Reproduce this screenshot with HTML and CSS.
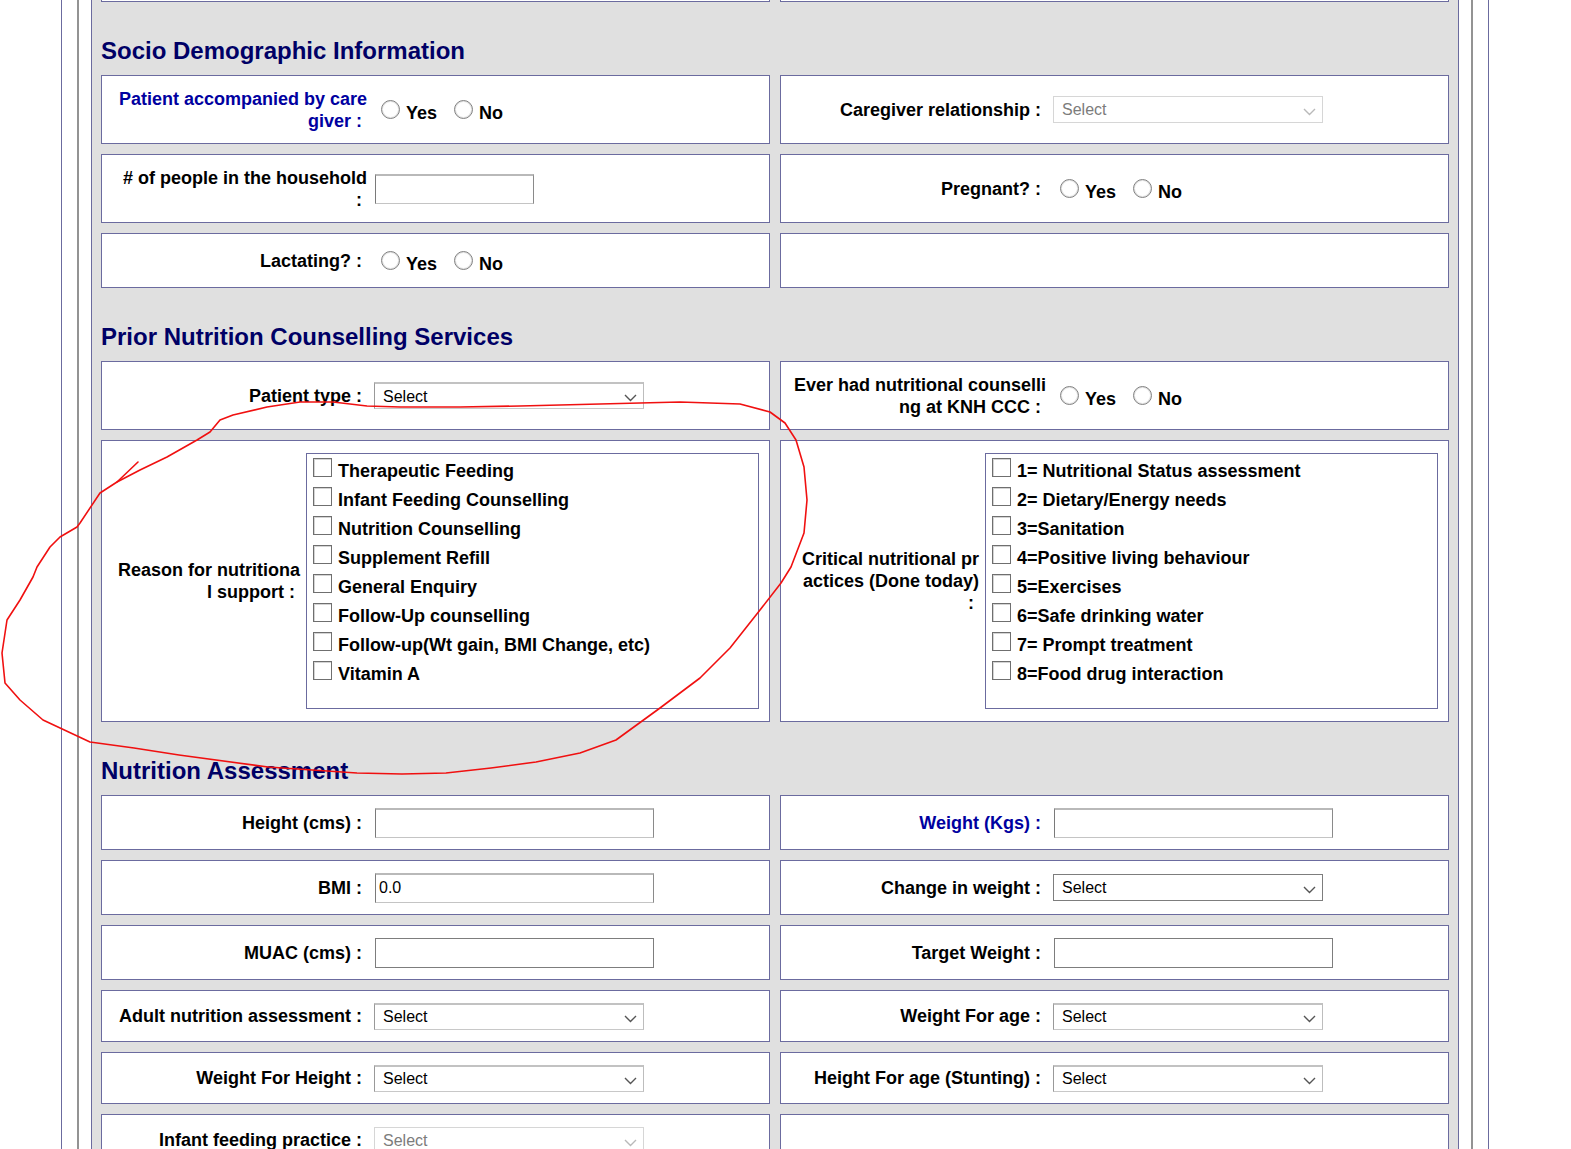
FILE: index.html
```html
<!DOCTYPE html>
<html lang="en">
<head>
    <meta charset="UTF-8">
    <meta name="viewport" content="width=device-width, initial-scale=1.0">
    <title>Nutrition Form</title>
    <link rel="stylesheet" href="styles.css">
</head>
<body>
    <div class="shell">
        <div class="groove">
            <div class="panel">
                <div class="row cut">
                    <div class="box"></div>
                    <div class="box"></div>
                </div>

                <h2 class="section-title">Socio Demographic Information</h2>
                <div class="row tall">
                    <div class="box">
                        <div class="label blue">Patient accompanied by care giver :&nbsp;</div>
                        <div class="field">
                            <label class="opt"><input type="radio" name="caregiver">Yes</label>
                            <label class="opt"><input type="radio" name="caregiver">No</label>
                        </div>
                    </div>
                    <div class="box">
                        <div class="label">Caregiver relationship :&nbsp;</div>
                        <div class="field">
                            <span class="select-wrap disabled">
                                <select disabled><option>Select</option></select>
                                <svg class="chevron" width="13" height="8" viewBox="0 0 13 8"><path d="M1 1l5.5 5.5L12 1"/></svg>
                            </span>
                        </div>
                    </div>
                </div>
                <div class="row tall">
                    <div class="box">
                        <div class="label"># of people in the household<br>:&nbsp;</div>
                        <div class="field"><input type="text" class="text-input small"></div>
                    </div>
                    <div class="box">
                        <div class="label">Pregnant? :&nbsp;</div>
                        <div class="field">
                            <label class="opt"><input type="radio" name="pregnant">Yes</label>
                            <label class="opt"><input type="radio" name="pregnant">No</label>
                        </div>
                    </div>
                </div>
                <div class="row short">
                    <div class="box">
                        <div class="label">Lactating? :&nbsp;</div>
                        <div class="field">
                            <label class="opt"><input type="radio" name="lactating">Yes</label>
                            <label class="opt"><input type="radio" name="lactating">No</label>
                        </div>
                    </div>
                    <div class="box"></div>
                </div>

                <h2 class="section-title">Prior Nutrition Counselling Services</h2>
                <div class="row tall">
                    <div class="box">
                        <div class="label">Patient type :&nbsp;</div>
                        <div class="field">
                            <span class="select-wrap">
                                <select><option>Select</option></select>
                                <svg class="chevron" width="13" height="8" viewBox="0 0 13 8"><path d="M1 1l5.5 5.5L12 1"/></svg>
                            </span>
                        </div>
                    </div>
                    <div class="box">
                        <div class="label">Ever had nutritional counselling at KNH CCC :&nbsp;</div>
                        <div class="field">
                            <label class="opt"><input type="radio" name="counselled">Yes</label>
                            <label class="opt"><input type="radio" name="counselled">No</label>
                        </div>
                    </div>
                </div>
                <div class="row">
                    <div class="box checks-box">
                        <div class="label narrow">Reason for nutritional support :&nbsp;</div>
                        <div class="check-list">
                            <label class="check-item"><input type="checkbox">Therapeutic Feeding</label>
                            <label class="check-item"><input type="checkbox">Infant Feeding Counselling</label>
                            <label class="check-item"><input type="checkbox">Nutrition Counselling</label>
                            <label class="check-item"><input type="checkbox">Supplement Refill</label>
                            <label class="check-item"><input type="checkbox">General Enquiry</label>
                            <label class="check-item"><input type="checkbox">Follow-Up counselling</label>
                            <label class="check-item"><input type="checkbox">Follow-up(Wt gain, BMI Change, etc)</label>
                            <label class="check-item"><input type="checkbox">Vitamin A</label>
                        </div>
                    </div>
                    <div class="box checks-box">
                        <div class="label narrow">Critical nutritional practices (Done today) :&nbsp;</div>
                        <div class="check-list">
                            <label class="check-item"><input type="checkbox">1= Nutritional Status assessment</label>
                            <label class="check-item"><input type="checkbox">2= Dietary/Energy needs</label>
                            <label class="check-item"><input type="checkbox">3=Sanitation</label>
                            <label class="check-item"><input type="checkbox">4=Positive living behaviour</label>
                            <label class="check-item"><input type="checkbox">5=Exercises</label>
                            <label class="check-item"><input type="checkbox">6=Safe drinking water</label>
                            <label class="check-item"><input type="checkbox">7= Prompt treatment</label>
                            <label class="check-item"><input type="checkbox">8=Food drug interaction</label>
                        </div>
                    </div>
                </div>

                <h2 class="section-title">Nutrition Assessment</h2>
                <div class="row short">
                    <div class="box">
                        <div class="label">Height (cms) :&nbsp;</div>
                        <div class="field"><input type="text" class="text-input"></div>
                    </div>
                    <div class="box">
                        <div class="label blue">Weight (Kgs) :&nbsp;</div>
                        <div class="field"><input type="text" class="text-input"></div>
                    </div>
                </div>
                <div class="row short">
                    <div class="box">
                        <div class="label">BMI :&nbsp;</div>
                        <div class="field"><input type="text" class="text-input" value="0.0"></div>
                    </div>
                    <div class="box">
                        <div class="label">Change in weight :&nbsp;</div>
                        <div class="field">
                            <span class="select-wrap dark">
                                <select><option>Select</option></select>
                                <svg class="chevron" width="13" height="8" viewBox="0 0 13 8"><path d="M1 1l5.5 5.5L12 1"/></svg>
                            </span>
                        </div>
                    </div>
                </div>
                <div class="row short">
                    <div class="box">
                        <div class="label">MUAC (cms) :&nbsp;</div>
                        <div class="field"><input type="text" class="text-input dark"></div>
                    </div>
                    <div class="box">
                        <div class="label">Target Weight :&nbsp;</div>
                        <div class="field"><input type="text" class="text-input dark"></div>
                    </div>
                </div>
                <div class="row compact">
                    <div class="box">
                        <div class="label">Adult nutrition assessment :&nbsp;</div>
                        <div class="field">
                            <span class="select-wrap">
                                <select><option>Select</option></select>
                                <svg class="chevron" width="13" height="8" viewBox="0 0 13 8"><path d="M1 1l5.5 5.5L12 1"/></svg>
                            </span>
                        </div>
                    </div>
                    <div class="box">
                        <div class="label">Weight For age :&nbsp;</div>
                        <div class="field">
                            <span class="select-wrap">
                                <select><option>Select</option></select>
                                <svg class="chevron" width="13" height="8" viewBox="0 0 13 8"><path d="M1 1l5.5 5.5L12 1"/></svg>
                            </span>
                        </div>
                    </div>
                </div>
                <div class="row compact">
                    <div class="box">
                        <div class="label">Weight For Height :&nbsp;</div>
                        <div class="field">
                            <span class="select-wrap">
                                <select><option>Select</option></select>
                                <svg class="chevron" width="13" height="8" viewBox="0 0 13 8"><path d="M1 1l5.5 5.5L12 1"/></svg>
                            </span>
                        </div>
                    </div>
                    <div class="box">
                        <div class="label">Height For age (Stunting) :&nbsp;</div>
                        <div class="field">
                            <span class="select-wrap">
                                <select><option>Select</option></select>
                                <svg class="chevron" width="13" height="8" viewBox="0 0 13 8"><path d="M1 1l5.5 5.5L12 1"/></svg>
                            </span>
                        </div>
                    </div>
                </div>
                <div class="row compact">
                    <div class="box">
                        <div class="label">Infant feeding practice :&nbsp;</div>
                        <div class="field">
                            <span class="select-wrap disabled">
                                <select disabled><option>Select</option></select>
                                <svg class="chevron" width="13" height="8" viewBox="0 0 13 8"><path d="M1 1l5.5 5.5L12 1"/></svg>
                            </span>
                        </div>
                    </div>
                    <div class="box"></div>
                </div>
            </div>
        </div>
    </div>

    <!-- reviewer's red pen mark over the screenshot -->
    <svg class="annotation" width="1571" height="1149" viewBox="0 0 1571 1149">
        <path d="M138 462 L117 482"/>
        <path d="M117 482 L140 470 L167 457 L197 440 L210 432 L220 420 L233 415 L267 407 L300 402 L333 402 L367 406 L400 407 L460 407 L520 406 L600 404 L680 402 L740 404 L770 412 L785 423 L796 440 L804 467 L807 500 L804 533 L791 567 L781 583 L760 610 L730 648 L700 678 L660 708 L616 740 L580 753 L536 762 L491 768 L446 773 L402 774 L357 773 L312 770 L268 767 L179 755 L134 748 L90 742 L43 720 L20 700 L5 683 L2 653 L7 620 L20 600 L33 577 L37 567 L50 547 L60 537 L77 527 L80 523 L100 493 L117 482"/>
    </svg>
</body>
</html>
```

FILE: styles.css
```css
html, body {
    margin: 0;
    padding: 0;
    height: 100%;
    overflow: hidden;
}
body {
    position: relative;
    background-color: #fff;
    font-family: "Liberation Sans", Arial, sans-serif;
    font-size: 18px;
    font-weight: bold;
    color: #000;
}

/* nested frame lines */
.shell {
    margin-left: 61px;
    width: 1396px;
    padding: 0 15px;
    border-left: 1px solid #6b6b9f;
    border-right: 1px solid #6b6b9f;
}
.groove {
    padding: 0 12px;
    border-left: 2px solid #939393;
    border-right: 2px solid #939393;
}
.panel {
    display: flex;
    flex-direction: column;
    gap: 10px;
    padding: 0 9px 20px;
    background-color: #e0e0e0;
    border-left: 1px solid #6b6b9f;
    border-right: 1px solid #6b6b9f;
}

.section-title {
    margin: 25px 0 0 0;
    font-size: 24px;
    line-height: 28px;
    color: #000066;
}

.row {
    display: grid;
    grid-template-columns: 1fr 1fr;
    gap: 10px;
}
.box {
    display: flex;
    align-items: center;
    box-sizing: border-box;
    background-color: #fff;
    border: 1px solid #6b6b9f;
}
.row.cut .box {
    height: 2px;
    border-top: none;
}
.row.tall .box {
    height: 69px;
}
.row.short .box {
    height: 55px;
}
.row.compact .box {
    height: 52px;
}
.checks-box {
    height: 282px;
}

.label {
    flex: 0 0 265px;
    box-sizing: border-box;
    padding-left: 9px;
    text-align: right;
    line-height: 22px;
    word-break: break-all;
}
.label.blue {
    color: #0000a0;
}
.label.narrow {
    flex-basis: 204px;
    padding-left: 14px;
    padding-right: 6px;
}

.field {
    display: flex;
    align-items: center;
    margin-left: 7px;
    white-space: nowrap;
}
.opt {
    display: block;
    line-height: 22px;
    margin: 4px 10px 0 0;
}
.opt input {
    appearance: none;
    -webkit-appearance: none;
    box-sizing: border-box;
    width: 19px;
    height: 19px;
    margin: 0 6px 0 7px;
    border: 1px solid #808080;
    border-radius: 50%;
    background-color: #fff;
    box-shadow: inset 0 0 0 1px #e2e2e2;
    vertical-align: baseline;
}

.text-input {
    box-sizing: border-box;
    width: 279px;
    height: 30px;
    margin: 0 0 0 1px;
    padding: 0 3px;
    border-style: solid;
    border-width: 2px 1px 1px 1px;
    border-color: #b9b9b9 #8a8a8a #c4c4c4 #7a7a7a;
    font-family: "Liberation Sans", Arial, sans-serif;
    font-size: 16px;
    color: #000;
    background-color: #fff;
}
.text-input.small {
    width: 159px;
}
.text-input.dark {
    border-width: 1px;
    border-color: #7d7d7d;
}

.select-wrap {
    position: relative;
    display: inline-block;
}
.select-wrap select {
    appearance: none;
    -webkit-appearance: none;
    box-sizing: border-box;
    width: 270px;
    height: 27px;
    margin: 0;
    padding: 0 0 0 8px;
    border-style: solid;
    border-width: 2px 1px 1px 1px;
    border-color: #c2c2c2 #bdbdbd #c8c8c8 #999;
    border-radius: 0;
    background-color: #fff;
    font-family: "Liberation Sans", Arial, sans-serif;
    font-size: 16px;
    color: #000;
}
.select-wrap.dark select {
    border-width: 1px;
    border-color: #7d7d7d;
}
.select-wrap.disabled select {
    border-width: 1px;
    border-color: #d6d6d6;
    color: #7c7c7c;
    opacity: 1;
}
.chevron {
    position: absolute;
    top: 12px;
    right: 7px;
    pointer-events: none;
    fill: none;
    stroke: #555;
    stroke-width: 1.4;
}
.select-wrap.disabled .chevron {
    stroke: #b9b9b9;
}

.check-list {
    box-sizing: border-box;
    width: 453px;
    padding: 3px 0 19px 6px;
    border: 1px solid #6b6b9f;
}
.check-item {
    display: block;
    line-height: 29px;
    white-space: nowrap;
}
.check-item input {
    appearance: none;
    -webkit-appearance: none;
    box-sizing: border-box;
    width: 19px;
    height: 19px;
    margin: 0 6px 0 0;
    border: 1px solid #6f6f6f;
    background-color: #fff;
    box-shadow: inset 1px 1px 0 #d4d4d4;
    vertical-align: baseline;
}

.annotation {
    position: absolute;
    top: 0;
    left: 0;
    pointer-events: none;
    fill: none;
    stroke: #f01010;
    stroke-width: 1.6;
    stroke-linejoin: round;
    stroke-linecap: round;
}
```
